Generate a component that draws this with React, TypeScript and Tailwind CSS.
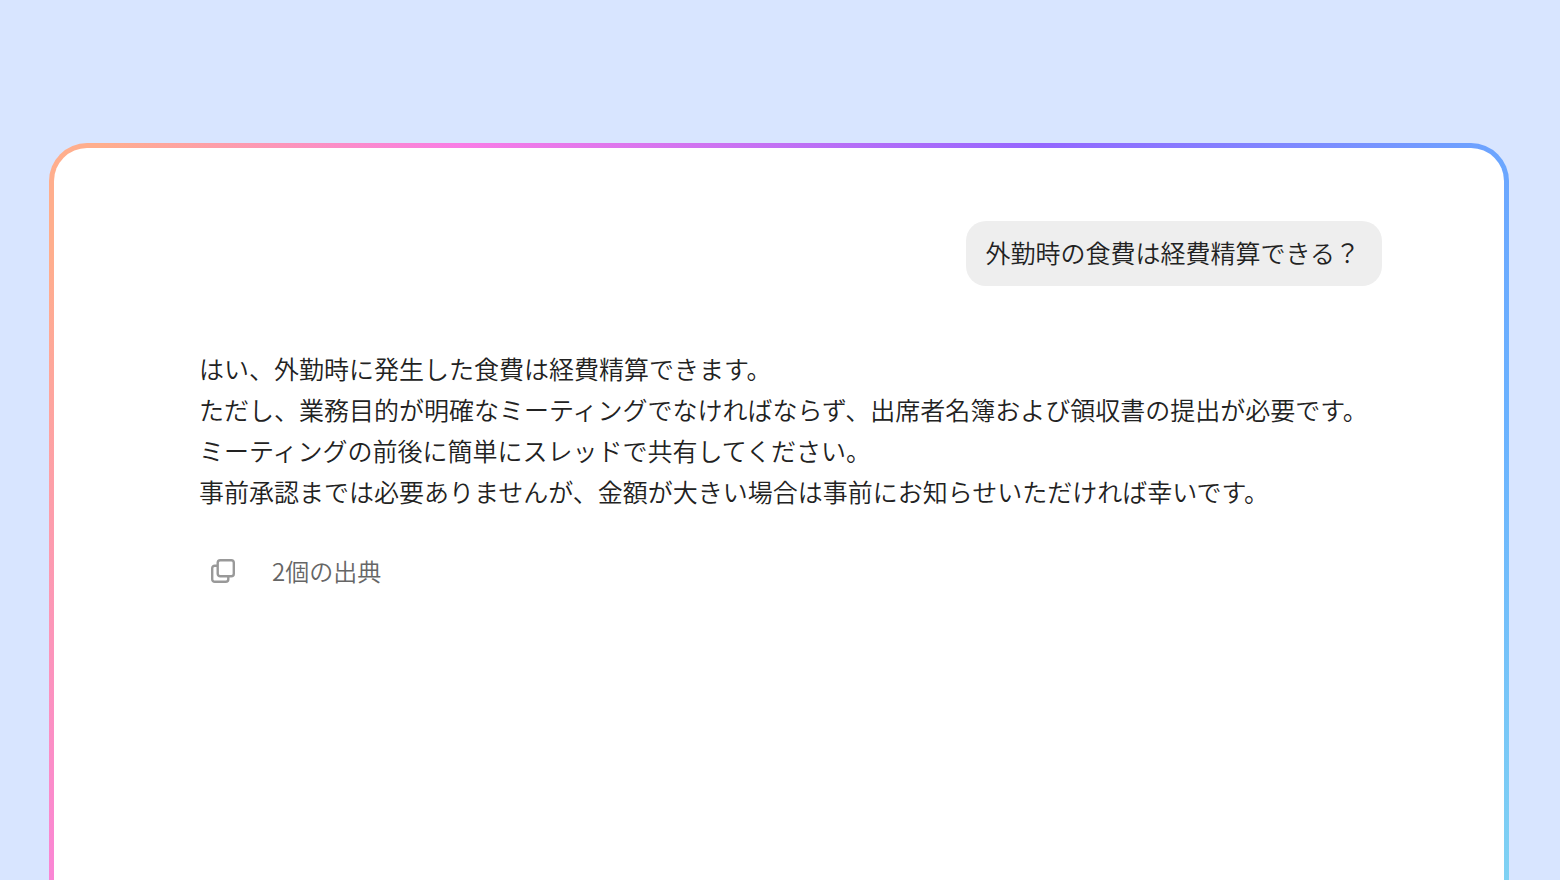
type AnswerProps = {
  lines: string[];
  sources: string;
};

const question = "外勤時の食費は経費精算できる？";

const answerLines = [
  "はい、外勤時に発生した食費は経費精算できます。",
  "ただし、業務目的が明確なミーティングでなければならず、出席者名簿および領収書の提出が必要です。",
  "ミーティングの前後に簡単にスレッドで共有してください。",
  "事前承認までは必要ありませんが、金額が大きい場合は事前にお知らせいただければ幸いです。",
];

function CopyIcon() {
  return (
    <svg
      className="h-6 w-6"
      viewBox="0 0 24 24"
      fill="none"
      stroke="#999999"
      strokeWidth="2.4"
      aria-hidden="true"
    >
      <rect x="6.7" y="1.2" width="16.1" height="16.1" rx="2.6" />
      <path
        d="M6.7 6.7H3.8a2.6 2.6 0 0 0-2.6 2.6v10.9a2.6 2.6 0 0 0 2.6 2.6h10.9a2.6 2.6 0 0 0 2.6-2.6v-2.9"
        strokeLinejoin="round"
      />
    </svg>
  );
}

function Question({ text }: { text: string }) {
  return (
    <div className="flex justify-end">
      <p className="rounded-[20px] bg-[#eeeeee] pt-[11px] pr-[22px] pb-[13px] pl-[19px] leading-[41px]">
        {text}
      </p>
    </div>
  );
}

function Answer({ lines, sources }: AnswerProps) {
  return (
    <article className="mt-[62px]">
      {lines.map((line) => (
        <p key={line} className="leading-[41px]">
          {line}
        </p>
      ))}
      <div className="mt-[35px] flex items-center gap-[25px] text-2xl text-[#666666]">
        <button type="button" aria-label="コピー" className="p-3">
          <CopyIcon />
        </button>
        <button type="button">{sources}</button>
      </div>
    </article>
  );
}

export default function App() {
  return (
    <div
      lang="ja"
      className="flex min-h-screen flex-col bg-[#d8e5ff] pt-[143px] pr-[51px] pl-[49px] font-['Noto_Sans_CJK_JP',sans-serif] text-[25px] font-[350] text-[#222222]"
    >
      <div className="flex flex-1 flex-col rounded-t-[38px] bg-[linear-gradient(115deg,#ffae8d_0%,#ffae8d_3%,#f97ce6_23%,#9466ff_55%,#6ba6ff_81%,#6ab2ff_88%,#7fd2f3_100%)] px-[5px] pt-[5px]">
        <main className="flex-1 rounded-t-[33px] bg-white pt-[73px] pr-[122px] pl-[145px]">
          <Question text={question} />
          <Answer lines={answerLines} sources="2個の出典" />
        </main>
      </div>
    </div>
  );
}
